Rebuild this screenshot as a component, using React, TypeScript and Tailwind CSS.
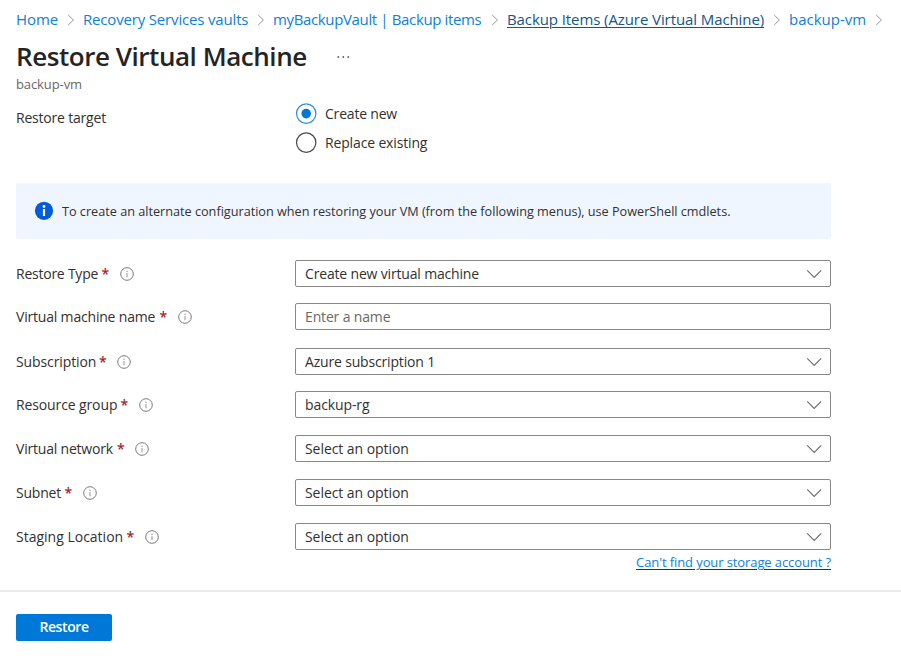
import type { ReactNode } from "react";

function CrumbChevron() {
  return (
    <span className="flex w-[25px] shrink-0 justify-center pt-[2px]">
      <svg width="8" height="12" viewBox="0 0 8 12" fill="none" stroke="#979593" strokeWidth="1">
        <path d="M1.2 1 L6.4 6 L1.2 11" />
      </svg>
    </span>
  );
}

function Crumb({ className, children }: { className: string; children: ReactNode }) {
  return (
    <>
      <a className={`shrink-0 whitespace-nowrap ${className}`}>{children}</a>
      <CrumbChevron />
    </>
  );
}

function InfoOutline() {
  return (
    <svg className="shrink-0" width="14" height="14" viewBox="0 0 14 14" fill="none">
      <circle cx="7" cy="7" r="6.3" stroke="#7d7b79" strokeWidth="1" />
      <path d="M7 6 V10.3" stroke="#979593" strokeWidth="1" />
      <circle cx="7" cy="4.2" r="0.7" fill="#979593" />
    </svg>
  );
}

function ChevronDown() {
  return (
    <svg className="shrink-0" width="16" height="10" viewBox="0 0 16 10" fill="none" stroke="#6e6c6a" strokeWidth="1.1">
      <path d="M1.2 1.4 L8.2 8.4 L15.2 1.4" />
    </svg>
  );
}

function Radio({ checked }: { checked?: boolean }) {
  return (
    <svg className="shrink-0" width="22" height="22" viewBox="0 0 22 22" fill="none">
      <circle cx="11.2" cy="10.6" r="9.7" stroke={checked ? "#2b8de0" : "#4a4846"} strokeWidth="1.2" />
      {checked && <circle cx="11.2" cy="10.6" r="4.8" fill="#0078d4" />}
    </svg>
  );
}

type Field = {
  label: string;
  labelClass: string;
  value: string;
  valueClass: string;
  rowClass: string;
  textClass?: string;
  input?: boolean;
};

const fields: Field[] = [
  { label: "Restore Type", labelClass: "w-[82px] tracking-[-0.24px]", value: "Create new virtual machine", valueClass: "tracking-[-0.17px]", rowClass: "" },
  { label: "Virtual machine name", labelClass: "w-[140px] tracking-[-0.19px]", value: "Enter a name", valueClass: "text-[#6a6866] tracking-[-0.15px]", rowClass: "mt-4", textClass: "pt-px", input: true },
  { label: "Subscription", labelClass: "w-[79.5px] tracking-[-0.1px]", value: "Azure subscription 1", valueClass: "tracking-[-0.17px]", rowClass: "mt-[18px]" },
  { label: "Resource group", labelClass: "w-[101px] tracking-[-0.12px]", value: "backup-rg", valueClass: "tracking-[-0.1px]", rowClass: "mt-4", textClass: "pt-px" },
  { label: "Virtual network", labelClass: "w-[97.5px] tracking-[-0.2px]", value: "Select an option", valueClass: "tracking-[-0.06px]", rowClass: "mt-[17px]" },
  { label: "Subnet", labelClass: "w-[45px] tracking-[-0.2px]", value: "Select an option", valueClass: "tracking-[-0.06px]", rowClass: "mt-[17px]" },
  { label: "Staging Location", labelClass: "w-[107px]", value: "Select an option", valueClass: "tracking-[-0.06px]", rowClass: "mt-[17px]", textClass: "pt-px" },
];

function FieldRow({ field }: { field: Field }) {
  const nudge = field.textClass ?? "";
  return (
    <div className={`flex h-[27px] items-center ${field.rowClass}`}>
      <div className={`flex w-[279px] shrink-0 items-center ${nudge}`}>
        <span className={`whitespace-nowrap ${field.labelClass}`}>{field.label}</span>
        <span className="w-[18px] pl-[3.5px] font-semibold text-[#a4262c]">*</span>
        <span className="pl-[3.5px]">
          <InfoOutline />
        </span>
      </div>
      <div className={`flex h-[27px] w-[536px] items-center justify-between rounded-[2px] border border-[#8a8886] pr-[8px] pl-[9px] ${nudge}`}>
        <span className={`whitespace-nowrap ${field.valueClass}`}>{field.value}</span>
        {!field.input && <ChevronDown />}
      </div>
    </div>
  );
}

export default function App() {
  return (
    <div className="flex h-[658px] w-[901px] flex-col overflow-hidden bg-white font-['Open_Sans','Noto_Sans',sans-serif] text-[14px] leading-5 text-[#323130]">
      <nav className="flex h-[29px] shrink-0 items-center pt-[9px] pl-4 text-[15px] text-[#0f7fd8]">
        <Crumb className="w-[42px] tracking-[-0.1px]">Home</Crumb>
        <Crumb className="w-[165px] tracking-[-0.17px]">Recovery Services vaults</Crumb>
        <Crumb className="w-[209px] tracking-[-0.36px]">myBackupVault | Backup items</Crumb>
        <Crumb className="w-[257px] tracking-[-0.09px] text-[#14568c] underline decoration-1 underline-offset-[2px]">
          Backup Items (Azure Virtual Machine)
        </Crumb>
        <Crumb className="w-[77px]">backup-vm</Crumb>
      </nav>

      <header className="flex flex-col pt-[9px] pl-4">
        <div className="flex h-[36px] items-center">
          <h1 className="w-[320px] text-[26px] leading-9 font-semibold tracking-[-0.45px] whitespace-nowrap text-[#252423]">
            Restore Virtual Machine
          </h1>
          <svg width="14" height="4" viewBox="0 0 14 4" fill="#605e5c">
            <circle cx="2.3" cy="3" r="0.9" />
            <circle cx="7.3" cy="3" r="0.9" />
            <circle cx="12.3" cy="3" r="0.9" />
          </svg>
        </div>
        <p className="mt-[2px] text-[13px] leading-4 tracking-[-0.1px] text-[#6a6866]">backup-vm</p>
      </header>

      <main className="flex flex-col pl-4">
        <div className="mt-[11px] flex h-[80px] items-start">
          <span className="w-[279px] pt-[5px] tracking-[-0.2px]">Restore target</span>
          <div className="flex flex-col gap-[9px] pt-px">
            <div className="flex h-5 items-center gap-2">
              <Radio checked />
              <span className="tracking-[-0.2px]">Create new</span>
            </div>
            <div className="flex h-5 items-center gap-2">
              <Radio />
              <span className="tracking-[-0.15px]">Replace existing</span>
            </div>
          </div>
        </div>

        <div className="flex h-[56px] w-[815px] items-center rounded-[2px] bg-[#eff6ff] pl-[18px]">
          <svg className="shrink-0" width="20" height="20" viewBox="0 0 20 20">
            <circle cx="10" cy="9.8" r="9.1" fill="#015cda" />
            <circle cx="10" cy="5.5" r="1.4" fill="#fff" />
            <rect x="8.9" y="8" width="2.2" height="7" fill="#fff" />
          </svg>
          <span className="pl-[8px] text-[12.7px] tracking-[-0.015px] whitespace-nowrap">
            To create an alternate configuration when restoring your VM (from the following menus), use PowerShell cmdlets.
          </span>
        </div>

        <div className="mt-[21px] flex flex-col">
          {fields.map((field) => (
            <FieldRow key={field.label} field={field} />
          ))}
        </div>

        <div className="mt-[2px] flex w-[815px] justify-end">
          <a className="text-[13px] tracking-[-0.1px] whitespace-nowrap text-[#0f7fd8] underline decoration-[#323130] decoration-1 underline-offset-[2px]">
            Can't find your storage account ?
          </a>
        </div>
      </main>

      <footer className="mt-[18px] border-t-2 border-[#ebebeb] pt-[22px] pl-4">
        <button className="flex h-[27px] w-[96px] items-center justify-center rounded-[2px] bg-[#0078d7] pb-[2px] font-semibold tracking-[-0.4px] text-white">
          Restore
        </button>
      </footer>
    </div>
  );
}
